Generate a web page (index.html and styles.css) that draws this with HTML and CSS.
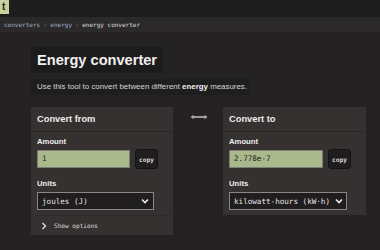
FILE: index.html
```html
<!DOCTYPE html>
<html>
<head>
<meta charset="utf-8">
<link rel="stylesheet" href="styles.css">
</head>
<body>
<header class="topbar"><span class="logo">t</span></header>
<nav class="crumbs"><a class="crumb-link">converters</a><span class="sep">›</span><a class="crumb-link">energy</a><span class="sep">›</span><span class="crumb-current">energy converter</span></nav>
<main class="main">
  <h1 class="title">Energy converter</h1>
  <p class="desc">Use this tool to convert between different <b>energy</b> measures.</p>
  <div class="converter">
    <section class="card">
      <h2 class="card-head">Convert from</h2>
      <div class="card-body">
        <label class="label">Amount</label>
        <div class="amount-row">
          <div class="input input-from">1</div>
          <button class="copy">copy</button>
        </div>
        <label class="label label-units">Units</label>
        <div class="select select-from"><span>joules (J)</span>
          <svg class="chev" width="8" height="6" viewBox="0 0 8 6"><polyline points="1,1.5 4,4.5 7,1.5" fill="none" stroke="#eee" stroke-width="1.6"/></svg>
        </div>
      </div>
      <div class="options">
        <svg class="opt-chev" width="6" height="8" viewBox="0 0 6 8"><polyline points="1.5,1 4.5,4 1.5,7" fill="none" stroke="#ddd" stroke-width="1.4"/></svg>
        <span>Show options</span>
      </div>
    </section>
    <div class="swap">
      <svg width="18" height="6" viewBox="0 0 18 6"><line x1="2" y1="3" x2="16" y2="3" stroke="#aca7a7" stroke-width="1.8"/><polygon points="0.5,3 3.5,0.8 3.5,5.2" fill="#aca7a7"/><polygon points="17.5,3 14.5,0.8 14.5,5.2" fill="#aca7a7"/></svg>
    </div>
    <section class="card">
      <h2 class="card-head">Convert to</h2>
      <div class="card-body">
        <label class="label">Amount</label>
        <div class="amount-row">
          <div class="input input-to">2.778e-7</div>
          <button class="copy">copy</button>
        </div>
        <label class="label label-units">Units</label>
        <div class="select select-to"><span>kilowatt-hours (kW·h)</span>
          <svg class="chev" width="8" height="6" viewBox="0 0 8 6"><polyline points="1,1.5 4,4.5 7,1.5" fill="none" stroke="#eee" stroke-width="1.6"/></svg>
        </div>
      </div>
    </section>
  </div>
</main>
</body>
</html>
```
FILE: styles.css
```css
* { box-sizing: border-box; }
html, body { margin: 0; padding: 0; }
body {
  background: #242222;
  color: #e8e6e6;
  font-family: "Liberation Sans", Arial, sans-serif;
  width: 380px;
  height: 250px;
  overflow: hidden;
}
.topbar {
  height: 17px;
  background: #1e1d1d;
  display: flex;
  align-items: flex-start;
}
.logo {
  display: block;
  height: 14px;
  width: 9px;
  background: #c9d09c;
  color: #1d1d1d;
  font-weight: bold;
  font-size: 10px;
  line-height: 14px;
  padding-left: 2px;
}
.crumbs {
  height: 15px;
  background: #2b2929;
  font-family: "DejaVu Sans Mono", monospace;
  font-size: 6px;
  line-height: 15px;
  padding-left: 4px;
  color: #d8d6d6;
  white-space: nowrap;
}
.crumb-link { color: #9fb0cc; }
.sep { color: #8a8686; padding: 0 3.3px; }
.crumb-current { color: #dedcdc; }
.main {
  padding: 15px 0 0 31px;
}
.title {
  display: inline-block;
  margin: 0;
  background: #1d1c1c;
  font-size: 14.6px;
  font-weight: bold;
  line-height: 26px;
  height: 26px;
  padding: 0 6px;
  color: #f2f0f0;
}
.desc {
  margin: 6px 0 0 0;
  display: block;
  width: 219px;
  background: #1f1e1e;
  font-size: 7.9px;
  line-height: 16px;
  height: 16px;
  padding: 0 6px;
  color: #d6d4d4;
  white-space: nowrap;
}
.desc b { color: #f2f0f0; }
.converter {
  display: grid;
  grid-template-columns: 142px 50px 143px;
  align-items: start;
  margin-top: 12px;
}
.card {
  background: #353131;
}
.card-head {
  margin: 0;
  font-size: 9.3px;
  font-weight: bold;
  height: 25px;
  line-height: 24px;
  padding: 0 6px;
  border-bottom: 1px solid #2a2727;
  color: #eeecec;
}
.card-body {
  padding: 5px 6px 5px 6px;
}
.label {
  display: block;
  font-size: 7.7px;
  font-weight: bold;
  line-height: 10px;
  height: 10px;
  color: #eeecec;
}
.label-units { margin-top: 10px; }
.amount-row {
  display: flex;
  align-items: center;
  gap: 5px;
  margin-top: 2px;
}
.input {
  height: 18px;
  background: #aab98b;
  border: 1.5px solid #7d7a7a;
  font-family: "DejaVu Sans Mono", monospace;
  font-size: 7.6px;
  line-height: 15px;
  padding-left: 4px;
  color: #1c1c1c;
}
.input-from { width: 93px; }
.input-to { width: 94px; }
.copy {
  width: 23px;
  height: 20px;
  padding: 0;
  background: #1f1d1d;
  border: 1px solid #141313;
  border-radius: 3px;
  color: #dcdada;
  font-family: "DejaVu Sans Mono", monospace;
  font-weight: bold;
  font-size: 6.2px;
}
.select {
  margin-top: 3px;
  height: 18px;
  background: #1f1d1d;
  border: 1.5px solid #8a8686;
  display: flex;
  align-items: center;
  justify-content: space-between;
  padding: 0 4px 0 4px;
  font-family: "DejaVu Sans Mono", monospace;
  font-size: 7.6px;
  color: #e6e4e4;
  white-space: nowrap;
}
.select-from { width: 117px; }
.select-to { width: 118px; padding-right: 3px; }
.chev { flex: none; }
.options {
  border-top: 1px solid #2e2b2b;
  height: 20px;
  display: flex;
  align-items: center;
  padding-left: 10px;
  gap: 7px;
  font-family: "DejaVu Sans Mono", monospace;
  font-size: 6.1px;
  color: #dcdada;
}
.swap {
  padding: 7px 0 0 17px;
  line-height: 0;
}
```
